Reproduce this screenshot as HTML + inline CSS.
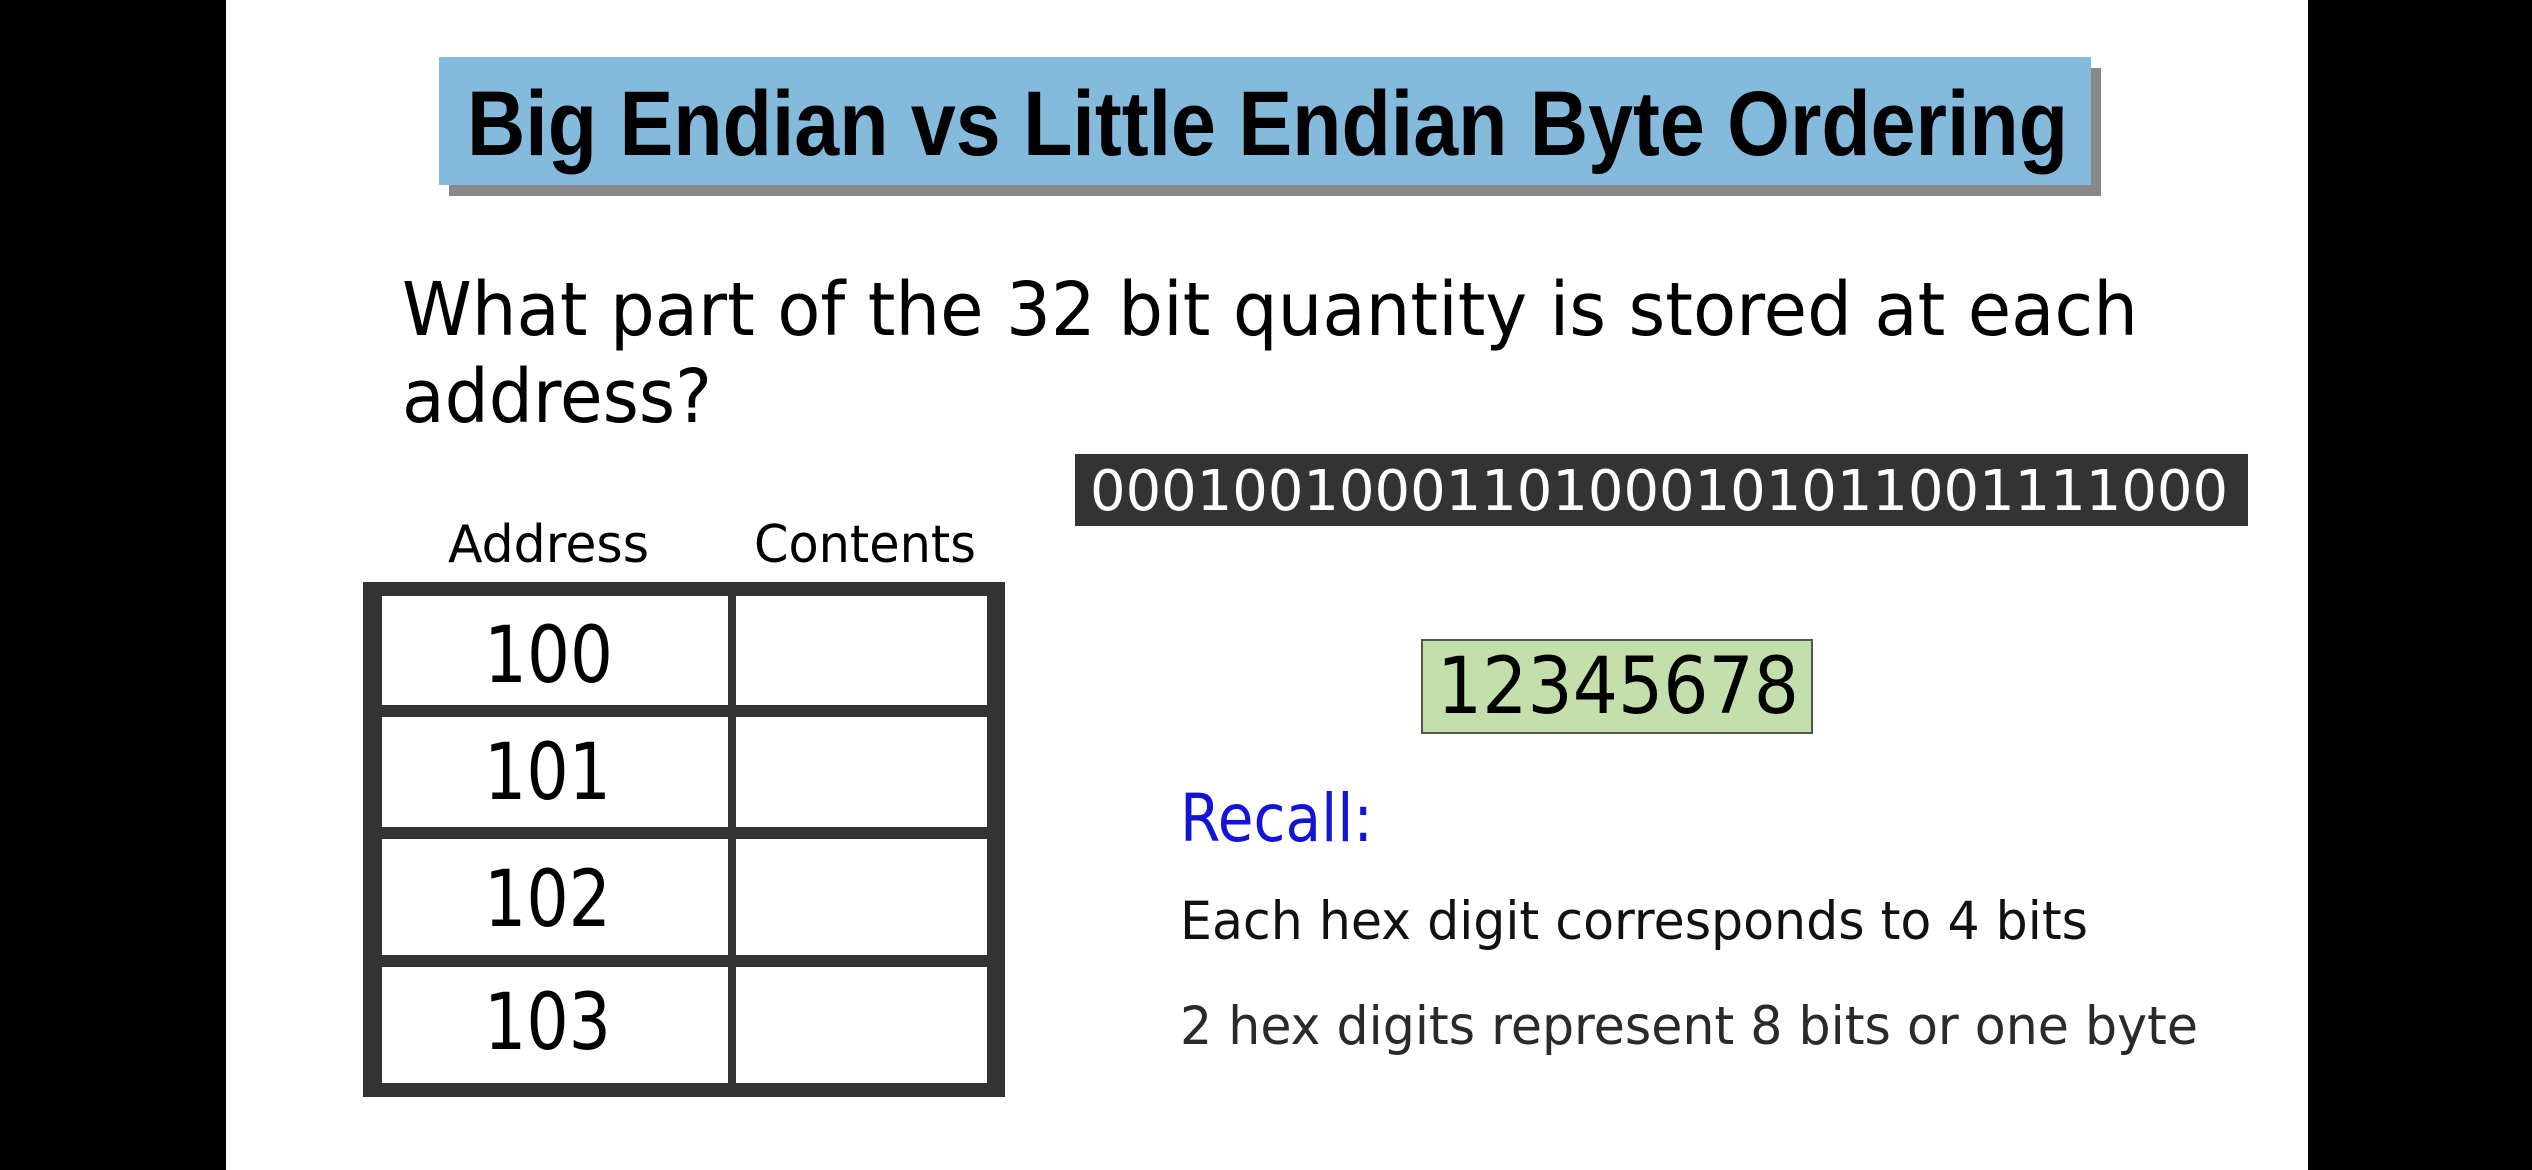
<!DOCTYPE html>
<html><head><meta charset="utf-8"><style>
html,body{margin:0;padding:0;background:#000;width:2532px;height:1170px;overflow:hidden}
svg{display:block}
</style></head><body>
<svg width="2532" height="1170" viewBox="0 0 2532 1170" xmlns="http://www.w3.org/2000/svg">
<rect x="0" y="0" width="2532" height="1170" fill="#000"/>
<rect x="226" y="0" width="2082" height="1170" fill="#fff"/>
<!-- title -->
<rect x="449" y="68" width="1652" height="128" fill="#888"/>
<rect x="439" y="57" width="1652" height="128" fill="#84bbdc"/>
<text x="467" y="155" font-family="'Liberation Sans Narrow','Liberation Sans',sans-serif" font-weight="bold" font-size="92" textLength="1601" lengthAdjust="spacingAndGlyphs" fill="#000">Big Endian vs Little Endian Byte Ordering</text>
<!-- question -->
<g font-family="'DejaVu Sans','Liberation Sans',sans-serif" fill="#000">
<text x="402" y="335" font-size="74" textLength="1736" lengthAdjust="spacingAndGlyphs">What part of the 32 bit quantity is stored at each</text>
<text x="402" y="422" font-size="74" textLength="310" lengthAdjust="spacingAndGlyphs">address?</text>
</g>
<!-- binary bar -->
<rect x="1075" y="454" width="1173" height="72" fill="#333"/>
<text x="1090" y="510" font-family="'DejaVu Sans','Liberation Sans',sans-serif" font-size="56" fill="#fff" textLength="1138" lengthAdjust="spacingAndGlyphs">00010010001101000101011001111000</text>
<!-- table headers -->
<g font-family="'DejaVu Sans','Liberation Sans',sans-serif" fill="#000" font-size="52">
<text x="448" y="562" textLength="201" lengthAdjust="spacingAndGlyphs">Address</text>
<text x="754" y="562" textLength="222" lengthAdjust="spacingAndGlyphs">Contents</text>
</g>
<!-- table -->
<rect x="363" y="582" width="642" height="515" fill="#333"/>
<g fill="#fff">
<rect x="382" y="596" width="346" height="109"/>
<rect x="736" y="596" width="251" height="109"/>
<rect x="382" y="717" width="346" height="110"/>
<rect x="736" y="717" width="251" height="110"/>
<rect x="382" y="839" width="346" height="116"/>
<rect x="736" y="839" width="251" height="116"/>
<rect x="382" y="967" width="346" height="116"/>
<rect x="736" y="967" width="251" height="116"/>
</g>
<g font-family="'DejaVu Sans','Liberation Sans',sans-serif" fill="#000" font-size="78">
<text x="484" y="682" textLength="129" lengthAdjust="spacingAndGlyphs">100</text>
<text x="484" y="799" textLength="127" lengthAdjust="spacingAndGlyphs">101</text>
<text x="484" y="926" textLength="127" lengthAdjust="spacingAndGlyphs">102</text>
<text x="484" y="1049" textLength="127" lengthAdjust="spacingAndGlyphs">103</text>
</g>
<!-- hex box -->
<rect x="1422" y="640" width="390" height="93" fill="#c3dfab" stroke="#555" stroke-width="2"/>
<text x="1437" y="713" font-family="'DejaVu Sans','Liberation Sans',sans-serif" font-size="78" fill="#000" textLength="362" lengthAdjust="spacingAndGlyphs">12345678</text>
<!-- recall -->
<g font-family="'DejaVu Sans','Liberation Sans',sans-serif">
<text x="1180" y="841" font-size="66" fill="#1414d6" textLength="193" lengthAdjust="spacingAndGlyphs">Recall:</text>
<text x="1180" y="939" font-size="53" fill="#111" textLength="908" lengthAdjust="spacingAndGlyphs">Each hex digit corresponds to 4 bits</text>
<text x="1180" y="1044" font-size="53" fill="#2a2a2a" textLength="1018" lengthAdjust="spacingAndGlyphs">2 hex digits represent 8 bits or one byte</text>
</g>
</svg>
</body></html>
